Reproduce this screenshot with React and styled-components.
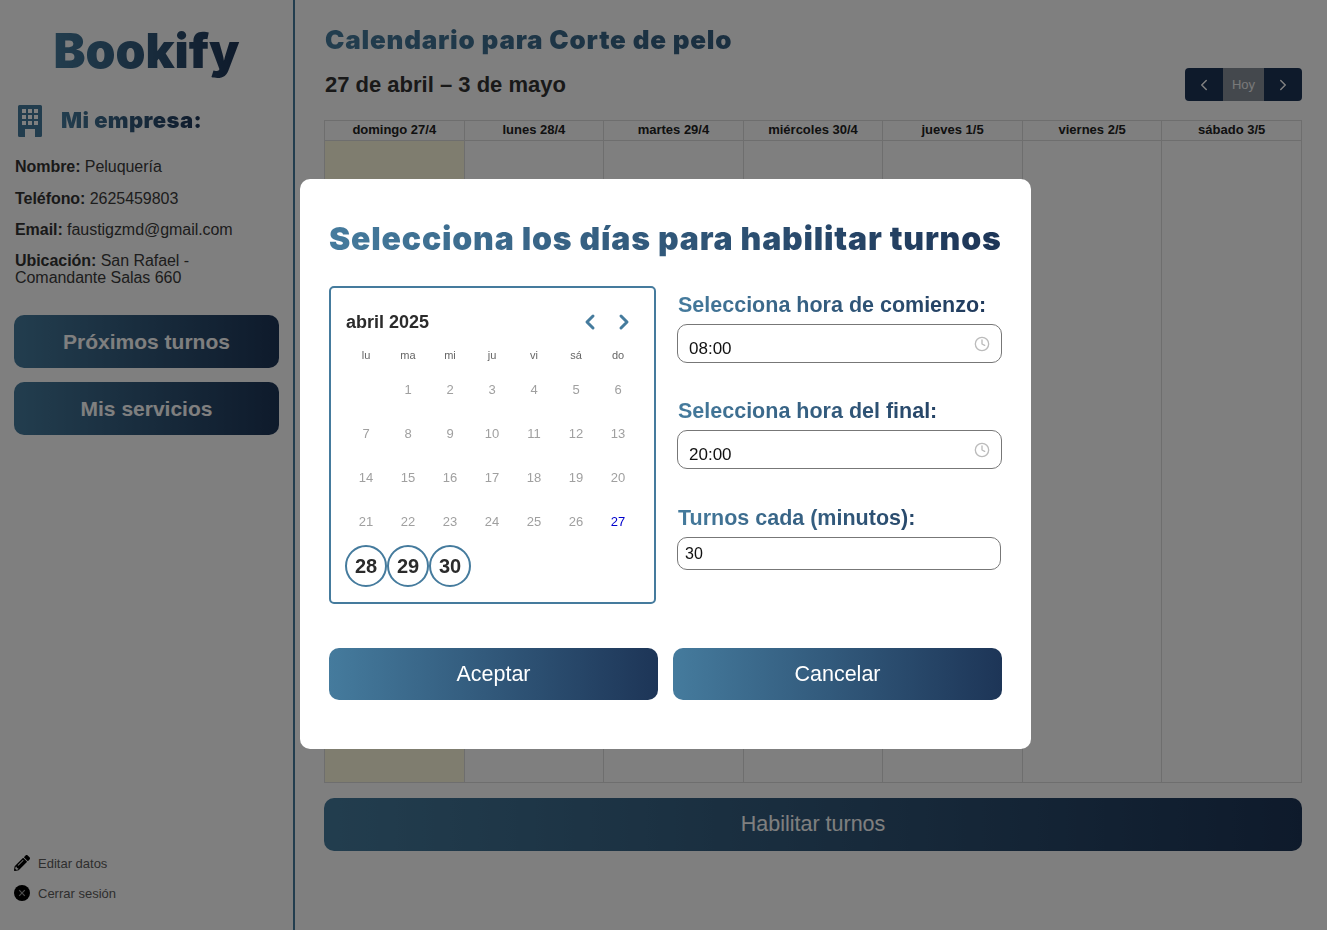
import React from 'react';
import styled, { createGlobalStyle } from 'styled-components';
import { FaPencilAlt } from 'react-icons/fa';
import { FiClock } from 'react-icons/fi';
import { ChevronLeft, ChevronRight } from 'lucide-react';

const BLUE = '#457b9d';
const NAVY = '#1d3557';
const gradient = `linear-gradient(90deg, ${BLUE}, ${NAVY})`;

const GlobalStyle = createGlobalStyle`
  * { box-sizing: border-box; }
  html, body { margin: 0; height: 100%; overflow: hidden; background: #fff; }
  body { font-family: "Liberation Sans", Arial, sans-serif; color: #2b2b2b; }
`;

const Page = styled.div`
  display: flex;
  height: 930px;
`;

const Sidebar = styled.aside`
  width: 295px;
  flex-shrink: 0;
  display: flex;
  flex-direction: column;
  padding: 24px 14px 28px 14px;
  border-right: 2px solid ${BLUE};
`;

const GradientText = styled.span`
  background: ${gradient};
  -webkit-background-clip: text;
  background-clip: text;
  color: transparent;
`;

const Logo = styled(GradientText)`
  align-self: center;
  font-family: Inter, sans-serif;
  font-size: 48px;
  font-weight: 900;
  line-height: 54px;
`;

const CompanyHeading = styled.div`
  display: flex;
  align-items: center;
  gap: 19px;
  margin: 27px 0 21px 4px;
  color: ${BLUE};
`;

const CompanyTitle = styled(GradientText)`
  margin-bottom: 2px;
  font-family: Inter, sans-serif;
  font-size: 22px;
  font-weight: 900;
  letter-spacing: 0.4px;
`;

const InfoLine = styled.p`
  margin: 0 0 ${p => p.$gap || 14}px 1px;
  font-size: 16px;
  line-height: 17px;
  letter-spacing: -0.05px;
  color: #3b3b3b;

  b {
    color: #333;
  }
`;

const SideButton = styled.button`
  height: 53px;
  margin-bottom: 14px;
  border: 0;
  border-radius: 10px;
  background: ${gradient};
  color: #fff;
  font: 700 21px "Liberation Sans", sans-serif;
`;

const SideFooter = styled.div`
  margin-top: auto;
  display: flex;
  flex-direction: column;
  gap: 12px;
`;

const FooterLink = styled.div`
  display: flex;
  align-items: center;
  gap: 8px;
  height: 18px;
  font-size: 13px;
  color: #5c5c5c;

  svg {
    color: #000;
  }
`;

const Main = styled.main`
  flex: 1;
  padding: 24px 25px 0 29px;
  min-width: 0;
`;

const MainTitle = styled(GradientText)`
  display: block;
  margin-left: 1px;
  font-family: Inter, sans-serif;
  font-size: 26px;
  font-weight: 900;
  line-height: 32px;
  letter-spacing: 0.78px;
`;

const RangeRow = styled.div`
  display: flex;
  justify-content: space-between;
  align-items: flex-start;
  height: 52px;
  margin-top: 12px;
`;

const RangeTitle = styled.h2`
  margin: 0 0 0 1px;
  font-size: 22px;
  line-height: 34px;
  font-weight: 700;
  color: #333;
`;

const NavGroup = styled.div`
  display: flex;
  height: 33px;
  border-radius: 4px;
  overflow: hidden;
`;

const NavButton = styled.button`
  display: flex;
  align-items: center;
  justify-content: center;
  width: ${p => (p.$today ? '41px' : '38px')};
  padding: 0;
  border: 0;
  background: ${p => (p.$today ? '#88909a' : NAVY)};
  color: ${p => (p.$today ? '#f2f2f2' : '#fff')};
  font: 13px "Liberation Sans", sans-serif;
`;

const WeekGrid = styled.div`
  display: grid;
  grid-template-columns: repeat(7, 1fr);
  grid-template-rows: 20px 1fr;
  height: 663px;
  border: 1px solid #ddd;
  border-right: 0;
`;

const DayHead = styled.div`
  display: flex;
  align-items: center;
  justify-content: center;
  padding-bottom: 2px;
  font-size: 13px;
  font-weight: 700;
  color: #222;
  border-right: 1px solid #ddd;
  border-bottom: 1px solid #ddd;
`;

const DayColumn = styled.div`
  border-right: 1px solid #ddd;
  background: ${p => (p.$today ? 'rgba(255, 220, 40, 0.15)' : 'transparent')};
`;

const EnableButton = styled.button`
  display: block;
  width: 100%;
  height: 53px;
  margin-top: 15px;
  border: 0;
  border-radius: 10px;
  background: ${gradient};
  color: #fff;
  font: 21.5px "Liberation Sans", sans-serif;
`;

const Overlay = styled.div`
  position: fixed;
  inset: 0;
  display: flex;
  align-items: center;
  justify-content: center;
  padding: 0 0 2px 4px;
  background: rgba(0, 0, 0, 0.5);
  will-change: transform;
`;

const Modal = styled.div`
  width: 731px;
  height: 570px;
  padding: 38px 29px 0;
  border-radius: 10px;
  background: #fff;
`;

const ModalTitle = styled(GradientText)`
  display: block;
  font-family: Inter, sans-serif;
  font-size: 32px;
  font-weight: 900;
  line-height: 44px;
  letter-spacing: 0.8px;
  white-space: nowrap;
`;

const ModalBody = styled.div`
  display: flex;
  gap: 21px;
  margin-top: 25px;
`;

const CalendarBox = styled.div`
  width: 327px;
  height: 318px;
  padding: 14px 14px 0;
  border: 2px solid ${BLUE};
  border-radius: 5px;
`;

const CalendarHead = styled.div`
  display: flex;
  align-items: center;
  justify-content: space-between;
  height: 40px;
`;

const MonthLabel = styled.span`
  margin-left: 1px;
  font-size: 18px;
  font-weight: 700;
  color: #2b2b2b;
`;

const CalendarArrows = styled.div`
  display: flex;
  gap: 10px;
  margin-right: 4px;
  color: ${BLUE};
`;

const CalendarGrid = styled.div`
  display: grid;
  grid-template-columns: repeat(7, 42px);
  grid-auto-rows: 44px;
  justify-items: center;
  align-items: center;
`;

const WeekdayRow = styled.div`
  display: grid;
  grid-template-columns: repeat(7, 42px);
  height: 25px;
  justify-items: center;
  align-items: center;
  font-size: 11px;
  color: #666;
`;

const DayCell = styled.span`
  display: flex;
  align-items: center;
  justify-content: center;
  width: 42px;
  height: 42px;
  font-size: 13px;
  color: ${p => (p.$current ? '#0000cc' : '#a0a0a0')};
  ${p => p.$selected && `
    margin-top: 2px;
    border: 2px solid ${BLUE};
    border-radius: 50%;
    font-size: 20px;
    font-weight: 700;
    color: #2b2b2b;
  `}
`;

const FormColumn = styled.div`
  display: flex;
  flex-direction: column;
  width: 325px;
  padding-top: 6px;
`;

const FieldLabel = styled(GradientText)`
  font-size: 21.5px;
  font-weight: 700;
  line-height: 26px;
  margin: ${p => p.$top || 0}px 0 ${p => p.$bottom || 6}px 1px;
`;

const TimeField = styled.div`
  display: flex;
  align-items: center;
  justify-content: space-between;
  height: 39px;
  padding: 0 11px;
  border: 1px solid #777;
  border-radius: 10px;
  font-size: 17px;
  color: #111;

  span {
    padding-top: 11px;
  }

  svg {
    color: #bbb;
  }
`;

const NumberField = styled.input`
  height: 33px;
  width: 324px;
  padding: 0 7px;
  border: 1px solid #777;
  border-radius: 10px;
  font: 16px "Liberation Sans", sans-serif;
  color: #111;
  outline: none;
`;

const ModalActions = styled.div`
  display: flex;
  gap: 15px;
  margin-top: 44px;
`;

const ActionButton = styled.button`
  flex: 1;
  height: 52px;
  border: 0;
  border-radius: 10px;
  background: ${gradient};
  color: #fff;
  font: 21.5px "Liberation Sans", sans-serif;
`;

const BuildingIcon = () => (
  <svg width="24" height="32" viewBox="0 0 24 32" fill="currentColor">
    <path
      fillRule="evenodd"
      d="M1.5 0h21A1.5 1.5 0 0 1 24 1.5v29a1.5 1.5 0 0 1-1.5 1.5H17v-8H7v8H1.5A1.5 1.5 0 0 1 0 30.5v-29A1.5 1.5 0 0 1 1.5 0zM4 4v4h4V4zm6 0v4h4V4zm6 0v4h4V4zM4 10v4h4v-4zm6 0v4h4v-4zm6 0v4h4v-4zM4 16v4h4v-4zm6 0v4h4v-4zm6 0v4h4v-4z"
    />
  </svg>
);

const LogoutIcon = () => (
  <svg width="16" height="16" viewBox="0 0 16 16">
    <circle cx="8" cy="8" r="8" fill="currentColor" />
    <path d="M5.2 5.2l5.6 5.6M10.8 5.2l-5.6 5.6" stroke="#999" strokeWidth="1.2" />
  </svg>
);

const days = ['domingo 27/4', 'lunes 28/4', 'martes 29/4', 'miércoles 30/4', 'jueves 1/5', 'viernes 2/5', 'sábado 3/5'];
const weekdays = ['lu', 'ma', 'mi', 'ju', 'vi', 'sá', 'do'];
const monthDays = Array.from({ length: 30 }, (_, i) => i + 1);

export default function App() {
  return (
    <>
      <GlobalStyle />
      <Page>
        <Sidebar>
          <Logo>Bookify</Logo>
          <CompanyHeading>
            <BuildingIcon />
            <CompanyTitle>Mi empresa:</CompanyTitle>
          </CompanyHeading>
          <InfoLine $gap={15}><b>Nombre:</b> Peluquería</InfoLine>
          <InfoLine><b>Teléfono:</b> 2625459803</InfoLine>
          <InfoLine><b>Email:</b> faustigzmd@gmail.com</InfoLine>
          <InfoLine $gap={29}><b>Ubicación:</b> San Rafael -<br />Comandante Salas 660</InfoLine>
          <SideButton>Próximos turnos</SideButton>
          <SideButton>Mis servicios</SideButton>
          <SideFooter>
            <FooterLink><FaPencilAlt size={16} />Editar datos</FooterLink>
            <FooterLink><LogoutIcon />Cerrar sesión</FooterLink>
          </SideFooter>
        </Sidebar>
        <Main>
          <MainTitle>Calendario para Corte de pelo</MainTitle>
          <RangeRow>
            <RangeTitle>27 de abril – 3 de mayo</RangeTitle>
            <NavGroup>
              <NavButton><ChevronLeft size={18} /></NavButton>
              <NavButton $today>Hoy</NavButton>
              <NavButton><ChevronRight size={18} /></NavButton>
            </NavGroup>
          </RangeRow>
          <WeekGrid>
            {days.map(d => <DayHead key={d}>{d}</DayHead>)}
            {days.map((d, i) => <DayColumn key={d} $today={i === 0} />)}
          </WeekGrid>
          <EnableButton>Habilitar turnos</EnableButton>
        </Main>
      </Page>
      <Overlay>
        <Modal>
          <ModalTitle>Selecciona los días para habilitar turnos</ModalTitle>
          <ModalBody>
            <CalendarBox>
              <CalendarHead>
                <MonthLabel>abril 2025</MonthLabel>
                <CalendarArrows>
                  <ChevronLeft size={24} strokeWidth={3} />
                  <ChevronRight size={24} strokeWidth={3} />
                </CalendarArrows>
              </CalendarHead>
              <WeekdayRow>
                {weekdays.map(w => <span key={w}>{w}</span>)}
              </WeekdayRow>
              <CalendarGrid>
                <span />
                {monthDays.map(n => (
                  <DayCell key={n} $current={n === 27} $selected={n > 27}>{n}</DayCell>
                ))}
              </CalendarGrid>
            </CalendarBox>
            <FormColumn>
              <FieldLabel>Selecciona hora de comienzo:</FieldLabel>
              <TimeField><span>08:00</span><FiClock size={16} /></TimeField>
              <FieldLabel $top={35}>Selecciona hora del final:</FieldLabel>
              <TimeField><span>20:00</span><FiClock size={16} /></TimeField>
              <FieldLabel $top={36} $bottom={6}>Turnos cada (minutos):</FieldLabel>
              <NumberField defaultValue="30" />
            </FormColumn>
          </ModalBody>
          <ModalActions>
            <ActionButton>Aceptar</ActionButton>
            <ActionButton>Cancelar</ActionButton>
          </ModalActions>
        </Modal>
      </Overlay>
    </>
  );
}
